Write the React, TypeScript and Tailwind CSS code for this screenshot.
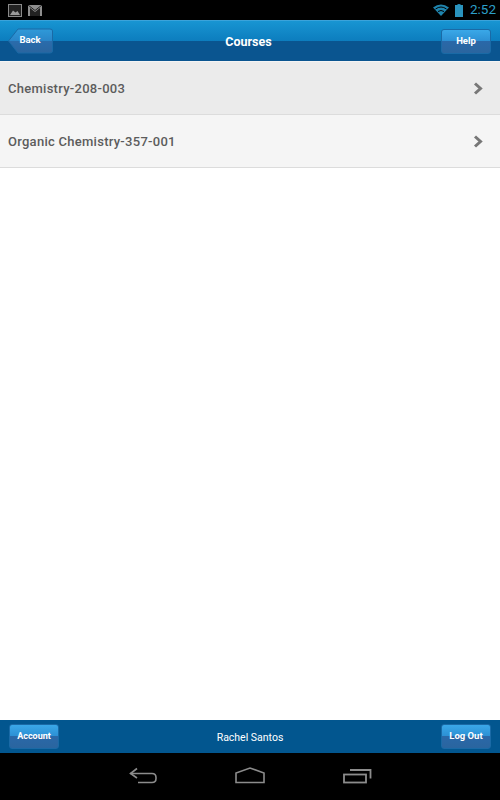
import React from 'react';

const courses = ['Chemistry-208-003', 'Organic Chemistry-357-001'];

const btnFill = 'bg-[linear-gradient(to_bottom,#3aa8e8_0%,#2c90d4_48%,#2a68a8_50%,#2a659f_100%)]';

const BarButton: React.FC<{ label: string; className?: string }> = ({ label, className = '' }) => (
  <div
    className={`flex h-[25px] w-[50px] items-center justify-center rounded-[3px] border border-[#1a6aa6] text-[9.5px] font-bold text-white ${btnFill} ${className}`}
  >
    {label}
  </div>
);

const BackButton = () => (
  <div className="relative ml-2 h-[26px] w-[45px]">
    <svg className="absolute inset-0" width="45" height="26" viewBox="0 0 45 26">
      <defs>
        <linearGradient id="backFill" x1="0" y1="0" x2="0" y2="1">
          <stop offset="0" stopColor="#2f9ad9" />
          <stop offset="0.48" stopColor="#2a86c9" />
          <stop offset="0.5" stopColor="#2a6cac" />
          <stop offset="1" stopColor="#2a659f" />
        </linearGradient>
      </defs>
      <path
        d="M0.5 13 L10 1 H42 Q44.5 1 44.5 3 V23 Q44.5 25 42 25 H10 Z"
        fill="url(#backFill)"
        stroke="#1a6aa6"
      />
    </svg>
    <span className="absolute inset-0 flex items-center justify-center pb-[2px] pr-px text-[9.5px] font-bold text-white">
      Back
    </span>
  </div>
);

const StatusBar = () => (
  <div className="flex h-5 items-center bg-black pl-2 pr-[5px]">
    {/* picture notification */}
    <svg width="14" height="13" viewBox="0 0 14 13">
      <rect x="0.5" y="0.5" width="13" height="12" fill="#222" stroke="#8a8a8a" />
      <path d="M2 11 L5 6.5 L7.5 8.5 L9.5 7 L12 11 Z" fill="#9a9a9a" />
    </svg>
    {/* mail notification */}
    <svg width="14" height="11" viewBox="0 0 14 11" className="ml-[6px]">
      <rect width="14" height="11" fill="#8e8e8e" />
      <path d="M2 11 V3 L7 7 L12 3 V11 Z" fill="#222" />
      <path d="M0 0 L7 5.5 L14 0" fill="none" stroke="#222" strokeWidth="1" />
    </svg>
    <div className="flex-1" />
    <svg width="16" height="12" viewBox="0 0 16 12">
      <path d="M0 3.5 Q8 -2.5 16 3.5 L8 12 Z" fill="#1f84ad" />
      <path d="M2.5 5 Q8 1 13.5 5" fill="none" stroke="#000" strokeWidth="1" />
      <path d="M5 7.5 Q8 5.5 11 7.5" fill="none" stroke="#000" strokeWidth="1" />
    </svg>
    <svg width="8" height="13" viewBox="0 0 8 13" className="ml-[6px]">
      <rect x="2.5" y="0" width="3" height="2" fill="#1f84ad" />
      <rect x="0" y="1" width="8" height="12" fill="#2a93bd" />
    </svg>
    <span className="ml-[7px] w-[25px] font-['Roboto',sans-serif] text-[13.5px] leading-none text-[#2c9fc9]">2:52</span>
  </div>
);

const Header = () => (
  <div className="relative flex h-[41px] items-center justify-between border-t border-[#3ba3da] bg-[linear-gradient(to_bottom,#1895d2_0%,#0c7dbe_50%,#0a5590_50%,#0a5590_100%)] pr-[9px]">
    <BackButton />
    <span className="pl-[3px] pt-[2px] text-[12.5px] font-bold text-white">Courses</span>
    <BarButton label="Help" />
  </div>
);

const CourseRow: React.FC<{ name: string; shade: string }> = ({ name, shade }) => (
  <div className={`flex h-[53px] items-center justify-between border-b border-[#dcdcdc] pl-2 pr-[17px] ${shade}`}>
    <span className="pt-[2px] text-[13px] font-medium tracking-[0.27px] text-[#5c5c5c]">{name}</span>
    <svg width="10" height="13" viewBox="0 0 10 13">
      <path d="M2 1.5 L7.5 6.5 L2 11.5" fill="none" stroke="#777" strokeWidth="3" />
    </svg>
  </div>
);

const NavBar = () => (
  <div className="flex h-[47px] items-center justify-center gap-[78px] bg-black pb-[2px] text-[#8c8c8c]">
    <svg width="28" height="17" viewBox="0 0 28 17" fill="none" stroke="currentColor" strokeWidth="1.6">
      <path d="M8 1.5 L1.5 6.5 L8 11" />
      <path d="M1.5 6.5 H23 Q27 6.5 27 10.5 V11.5 Q27 15.5 23 15.5 H9" />
    </svg>
    <svg width="30" height="17" viewBox="0 0 30 17" fill="none" stroke="currentColor" strokeWidth="1.6">
      <path d="M1 15.5 V6 L15 1 L29 6 V15.5 Z" />
    </svg>
    <svg width="29" height="16" viewBox="0 0 29 16" fill="none" stroke="currentColor" strokeWidth="1.8">
      <rect x="1" y="6.5" width="22" height="8" />
      <path d="M7 2 H27.5 V10.5" />
    </svg>
  </div>
);

export default function App() {
  return (
    <div className="flex h-[800px] w-[500px] flex-col bg-white font-['Roboto',sans-serif]">
      <StatusBar />
      <Header />
      <div className="h-px bg-[#f4f4f4]" />
      <CourseRow name={courses[0]} shade="bg-[#ebebeb]" />
      <CourseRow name={courses[1]} shade="bg-[#f5f5f5]" />
      <div className="flex-1" />
      <div className="flex h-[33px] items-center justify-between bg-[#02568f] pl-[9px] pr-[9px]">
        <BarButton label="Account" className="text-[9px]" />
        <span className="pt-[2px] text-[10.5px] text-white">Rachel Santos</span>
        <BarButton label="Log Out" />
      </div>
      <NavBar />
    </div>
  );
}
